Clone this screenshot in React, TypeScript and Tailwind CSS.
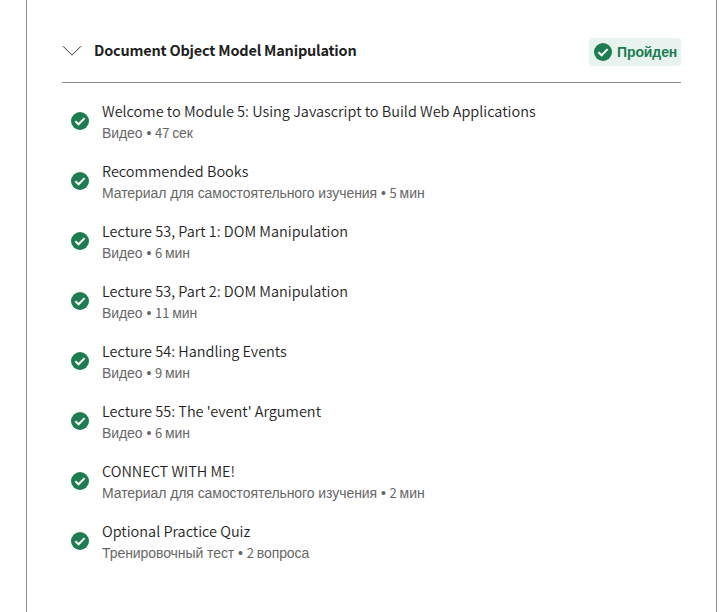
import React from "react";

type Item = { title: string; kind: string; amount: string; unit: string };

const items: Item[] = [
  { title: "Welcome to Module 5: Using Javascript to Build Web Applications", kind: "Видео", amount: "47", unit: "сек" },
  { title: "Recommended Books", kind: "Материал для самостоятельного изучения", amount: "5", unit: "мин" },
  { title: "Lecture 53, Part 1: DOM Manipulation", kind: "Видео", amount: "6", unit: "мин" },
  { title: "Lecture 53, Part 2: DOM Manipulation", kind: "Видео", amount: "11", unit: "мин" },
  { title: "Lecture 54: Handling Events", kind: "Видео", amount: "9", unit: "мин" },
  { title: "Lecture 55: The 'event' Argument", kind: "Видео", amount: "6", unit: "мин" },
  { title: "CONNECT WITH ME!", kind: "Материал для самостоятельного изучения", amount: "2", unit: "мин" },
  { title: "Optional Practice Quiz", kind: "Тренировочный тест", amount: "2", unit: "вопроса" },
];

function CheckIcon() {
  return (
    <svg className="size-[18px] shrink-0" viewBox="0 0 18 18" fill="none">
      <circle cx="9" cy="9" r="9" fill="#1d7c50" />
      <path d="M4.4 9.2 7.6 12.3 13.6 6.1" stroke="#fff" strokeWidth="2" />
    </svg>
  );
}

function ItemRow({ title, kind, amount, unit }: Item) {
  return (
    <li className="flex h-[60px] items-center gap-[13px] pl-[9px]">
      <CheckIcon />
      <div className="whitespace-nowrap pb-px">
        <p className="h-[22px] font-['Noto_Sans_CJK_SC',sans-serif] text-[14.5px] font-[350] leading-[22px] tracking-[-0.01px] text-[#1f1f1f]">{title}</p>
        <p className="h-5 pt-px font-['Liberation_Sans',sans-serif] text-sm leading-5 tracking-[-0.07px] text-[#666]">
          {kind} •{" "}
          <span className="font-['Noto_Sans_CJK_SC',sans-serif] text-[13px] leading-none">{amount} </span>
          {unit}
        </p>
      </div>
    </li>
  );
}

export default function App() {
  return (
    <div className="h-[612px] w-[727px] overflow-hidden bg-white">
      <main className="ml-[26px] h-full w-[691px] border-x border-[#8c8c8c] px-[35px] pt-[20px]">
        <header className="flex h-[63px] items-center border-b border-[#8c8c8c]">
          <svg className="h-[12px] w-[20px]" viewBox="0 0 20 12" fill="none">
            <path d="M1 1.2 10 10.2 19 1.2" stroke="#333" />
          </svg>
          <h2 className="ml-[12px] whitespace-nowrap pb-[3px] font-['Noto_Sans_CJK_SC',sans-serif] text-[14.5px] font-bold tracking-[-0.21px] text-[#1f1f1f]">
            Document Object Model Manipulation
          </h2>
          <div className="mt-[2px] ml-auto flex h-7 w-[92px] items-center gap-[5px] rounded-[4px] bg-[#e8f3f0] pl-[5px] font-['Liberation_Sans',sans-serif] text-sm font-bold tracking-[-0.1px] text-[#1d7c50]">
            <CheckIcon />
            Пройден
          </div>
        </header>
        <ul className="pt-[8px]">
          {items.map((item) => (
            <ItemRow key={item.title} {...item} />
          ))}
        </ul>
      </main>
    </div>
  );
}
